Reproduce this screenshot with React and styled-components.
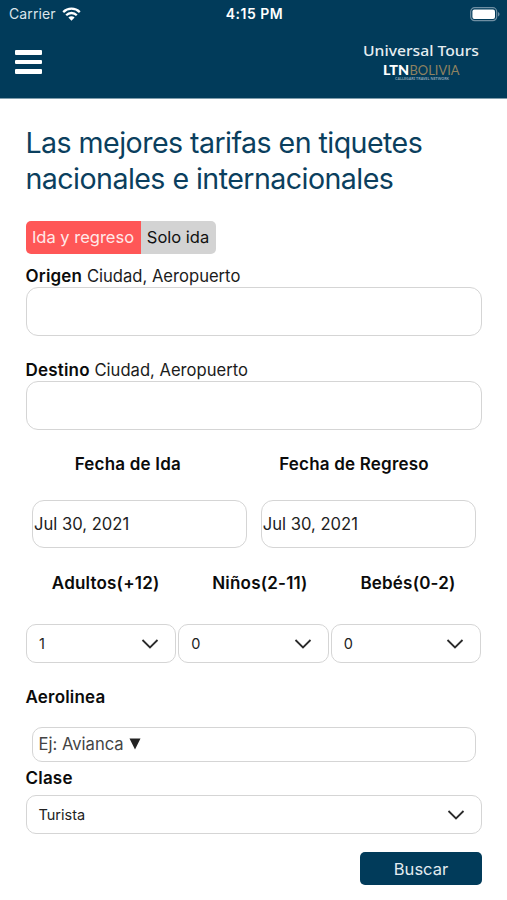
import styled, { createGlobalStyle } from "styled-components";

const GlobalStyle = createGlobalStyle`
* {
  box-sizing: border-box;
}
body {
  margin: 0;
  background-color: white;
  font-family: Inter, "Liberation Sans", sans-serif;
}
`;

const Page = styled.div`
height: 900px;
overflow: hidden;
color: #0b0b0b;
`;

// header
const Header = styled.header`
height: 99px;
background-color: #013b5a;
border-bottom: 1px solid #7f9dac;
color: white;
`;

const StatusBar = styled.div`
display: grid;
grid-template-columns: 1fr auto 1fr;
align-items: center;
height: 28px;
padding: 0 7px 0 9px;
font-size: 14px;
line-height: 20px;
`;

const Carrier = styled.div`
display: flex;
align-items: center;
gap: 6px;
color: #dbe5eb;
letter-spacing: 0.1px;
`;

const Clock = styled.b`
font-weight: 600;
font-size: 14px;
letter-spacing: 0.5px;
`;

const Battery = styled.svg`
justify-self: end;
`;

const NavBar = styled.div`
display: flex;
justify-content: space-between;
align-items: flex-start;
padding: 12px 27px 0 15px;
`;

const MenuButton = styled.button`
display: flex;
flex-direction: column;
gap: 5px;
margin-top: 10px;
padding: 0;
border: 0;
background: none;
`;

const Bar = styled.span`
width: 27px;
height: 4.7px;
border-radius: 1px;
background-color: white;
`;

// form
const Form = styled.main`
display: flex;
flex-direction: column;
padding: 26px 25px 0 25.5px;
`;

const Title = styled.h1`
margin: 0 0 24px;
color: #0b3f5e;
font-size: 28.6px;
font-weight: 400;
line-height: 36px;
letter-spacing: -0.56px;
white-space: nowrap;
`;

const Toggle = styled.div`
display: flex;
align-self: flex-start;
height: 33px;
margin-bottom: 12px;
border-radius: 5px;
overflow: hidden;
`;

const ToggleButton = styled.button`
width: ${(props) => props.$width};
padding: 0 0 2px;
border: 0;
background-color: ${(props) => (props.$active ? "#ff5757" : "#d3d3d3")};
color: ${(props) => (props.$active ? "#ffe9e9" : "#111")};
font-family: inherit;
font-size: 16.5px;
white-space: nowrap;
`;

const Label = styled.label`
height: 21px;
font-size: 16.6px;
line-height: 21px;
color: #1c1c1c;

b {
  color: #0b0b0b;
  font-size: 17px;
  font-weight: 600;
  letter-spacing: 0.2px;
}
`;

const Box = styled.div`
display: flex;
align-items: center;
justify-content: space-between;
height: ${(props) => props.$height};
border: 1px solid #d5d5d5;
border-radius: 12px;
font-size: 16.6px;
color: #222;
`;

const CityBox = styled(Box)`
margin-bottom: 24px;
`;

const Headings = styled.div`
display: flex;
justify-content: space-around;
margin-bottom: 30px;
`;

const DateHeadings = styled(Headings)`
margin-bottom: 25px;
padding-right: 4px;
`;

const Dates = styled.div`
display: grid;
grid-template-columns: 1fr 1fr;
gap: 14px;
margin-bottom: 25px;
padding: 0 6.5px;
`;

const DateBox = styled(Box)`
padding-left: 1px;
`;

const Passengers = styled.div`
display: grid;
grid-template-columns: repeat(3, 1fr);
gap: 2px;
margin-bottom: 24px;
padding: 0 1px 0 0.5px;
`;

const Select = styled(Box)`
padding: 0 16px 0 12px;
border-radius: 10px;
font-size: 14.5px;
`;

const AirlineLabel = styled(Label)`
margin-bottom: 19px;
`;

const AirlineBox = styled(Box)`
justify-content: flex-start;
gap: 5px;
margin: 0 6px 6px;
padding: 0 0 1px 6px;
border-radius: 10px;
color: #444;
`;

const ClassLabel = styled(Label)`
margin-bottom: 6px;
`;

const Submit = styled.button`
align-self: flex-end;
width: 122px;
height: 33px;
margin-top: 18px;
padding: 0;
border: 0;
border-radius: 5px;
background-color: #013b5a;
color: #e3ebf0;
font-family: inherit;
font-size: 16.5px;
`;

function WifiIcon() {
  return (
    <svg width="19" height="14" viewBox="0 0 19 14" fill="none" stroke="white" strokeWidth="2.3">
      <path d="M1.2 5.1a11.8 11.8 0 0 1 16.6 0" />
      <path d="M4.2 8.2a7.5 7.5 0 0 1 10.6 0" />
      <path d="M9.5 13.8 6.4 10.6a4.4 4.4 0 0 1 6.2 0z" fill="white" stroke="none" />
    </svg>
  );
}

function BatteryIcon() {
  return (
    <Battery width="30" height="15" viewBox="0 0 30 15">
      <rect x="0.7" y="0.7" width="26" height="13" rx="4" fill="none" stroke="#6f8fa3" strokeWidth="1.2" />
      <rect x="2.4" y="2.4" width="22.6" height="9.6" rx="2" fill="white" />
      <path d="M28 5v4.5c2-.8 2-3.7 0-4.5z" fill="#6f8fa3" />
    </Battery>
  );
}

function Logo() {
  return (
    <svg width="117" height="44" viewBox="0 0 117 44" fontFamily='"Noto Sans", "Open Sans", sans-serif'>
      <text x="0" y="16" fontSize="15" fontWeight="500" fill="#e6edf1" textLength="116" lengthAdjust="spacingAndGlyphs">Universal Tours</text>
      <text x="20" y="34.8" fontFamily="Lato, sans-serif" fontWeight="900" fontSize="12.8" fill="white" textLength="26" lengthAdjust="spacingAndGlyphs">LTN</text>
      <text x="46.5" y="34.8" fontFamily="Lato, sans-serif" fontSize="12.8" fill="#8f8260" textLength="50" lengthAdjust="spacingAndGlyphs">BOLIVIA</text>
      <text x="32" y="39.8" fontSize="3" fontWeight="600" fill="#8fa7b5" textLength="54" lengthAdjust="spacingAndGlyphs">CALLEGARI TRAVEL NETWORK</text>
    </svg>
  );
}

function Chevron() {
  return (
    <svg width="18" height="10" viewBox="0 0 18 10" fill="none" stroke="#2b2b2b" strokeWidth="1.8">
      <path d="M1.5 1 9 8.5 16.5 1" />
    </svg>
  );
}

function App() {
  return (
    <Page>
      <GlobalStyle />
      <Header>
        <StatusBar>
          <Carrier>
            <span>Carrier</span>
            <WifiIcon />
          </Carrier>
          <Clock>4:15 PM</Clock>
          <BatteryIcon />
        </StatusBar>
        <NavBar>
          <MenuButton aria-label="Menu">
            <Bar />
            <Bar />
            <Bar />
          </MenuButton>
          <Logo />
        </NavBar>
      </Header>

      <Form>
        <Title>
          Las mejores tarifas en tiquetes
          <br />
          nacionales e internacionales
        </Title>
        <Toggle>
          <ToggleButton $active $width="115px">Ida y regreso</ToggleButton>
          <ToggleButton $width="75px">Solo ida</ToggleButton>
        </Toggle>

        <Label><b>Origen</b> Ciudad, Aeropuerto</Label>
        <CityBox $height="49px" />
        <Label><b>Destino</b> Ciudad, Aeropuerto</Label>
        <CityBox $height="49px" />

        <DateHeadings>
          <Label><b>Fecha de Ida</b></Label>
          <Label><b>Fecha de Regreso</b></Label>
        </DateHeadings>
        <Dates>
          <DateBox $height="48px">Jul 30, 2021</DateBox>
          <DateBox $height="48px">Jul 30, 2021</DateBox>
        </Dates>

        <Headings>
          <Label><b>Adultos(+12)</b></Label>
          <Label><b>Niños(2-11)</b></Label>
          <Label><b>Bebés(0-2)</b></Label>
        </Headings>
        <Passengers>
          <Select $height="39px">1<Chevron /></Select>
          <Select $height="39px">0<Chevron /></Select>
          <Select $height="39px">0<Chevron /></Select>
        </Passengers>

        <AirlineLabel><b>Aerolinea</b></AirlineLabel>
        <AirlineBox $height="35px">
          <span>Ej: Avianca</span>
          <svg width="12" height="12" viewBox="0 0 12 12">
            <path d="M0.5 0.5h11L6 11.5z" fill="#222" />
          </svg>
        </AirlineBox>
        <ClassLabel><b>Clase</b></ClassLabel>
        <Select $height="39px">Turista<Chevron /></Select>

        <Submit>Buscar</Submit>
      </Form>
    </Page>
  );
}

export default App;
